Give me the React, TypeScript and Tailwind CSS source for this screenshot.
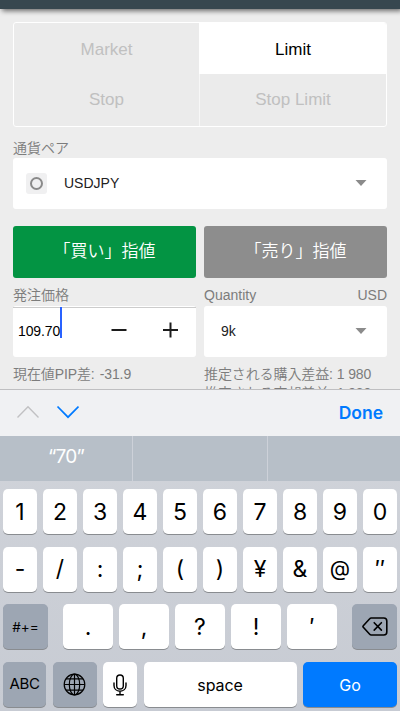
import type { ReactNode } from "react";
import clsx from "clsx";

const NUMBER_ROW = ["1", "2", "3", "4", "5", "6", "7", "8", "9", "0"];
const SYMBOL_ROW = ["-", "/", ":", ";", "(", ")", "¥", "&", "@", "″"];
const PUNCTUATION_ROW = [".", ",", "?", "!", "′"];

const SANS = "font-['Liberation_Sans','Noto_Sans_CJK_JP',sans-serif]";

function Key({
  children,
  className,
  tone = "light",
  label,
}: {
  children: ReactNode;
  className?: string;
  tone?: "light" | "dark" | "blue";
  label?: string;
}) {
  return (
    <button
      type="button"
      aria-label={label}
      className={clsx(
        "flex h-[45px] items-center justify-center rounded-[5px] shadow-[0_1px_0_#898c90]",
        tone === "light" && "bg-white text-black",
        tone === "dark" && "bg-[#9da6b3] text-black",
        tone === "blue" && "bg-[#007aff] text-white",
        className,
      )}
    >
      {children}
    </button>
  );
}

function Caret() {
  return (
    <svg width="12" height="6" viewBox="0 0 12 6" className="mb-0.5 fill-[#8b8b8b]">
      <path d="M0.5 0h11L6 6z" />
    </svg>
  );
}

function GlobeIcon() {
  return (
    <svg width="23" height="23" viewBox="0 0 23 23" fill="none" stroke="#000" strokeWidth="1.2">
      <circle cx="11.5" cy="11.5" r="10.3" />
      <ellipse cx="11.5" cy="11.5" rx="5.2" ry="10.3" />
      <path d="M11.5 1.2v20.6M1.2 11.5h20.6M3.2 5.8h16.6M3.2 17.2h16.6" />
    </svg>
  );
}

function MicIcon() {
  return (
    <svg
      width="14"
      height="22"
      viewBox="0 0 14 22"
      fill="none"
      stroke="#000"
      strokeWidth="1.4"
      strokeLinecap="round"
    >
      <rect x="3.7" y="1" width="6.6" height="14" rx="3.3" />
      <path d="M1 9v2.4c0 3.4 2.5 5.8 6 5.8s6-2.4 6-5.8V9M7 17.2v3.6M3.7 20.8h6.6" />
    </svg>
  );
}

function DeleteIcon() {
  return (
    <svg
      width="26"
      height="19"
      viewBox="0 0 26 19"
      fill="none"
      stroke="#000"
      strokeWidth="1.6"
      strokeLinejoin="round"
      strokeLinecap="round"
    >
      <path d="M9.2 1h12.6a3 3 0 0 1 3 3v11a3 3 0 0 1-3 3H9.2a2 2 0 0 1-1.5-.7L1.3 10.3a1.2 1.2 0 0 1 0-1.6L7.7 1.7A2 2 0 0 1 9.2 1z" />
      <path d="M12.2 5.7l7.2 7.4M19.4 5.7l-7.2 7.4" />
    </svg>
  );
}

function OrderForm() {
  return (
    <main className={`h-[380px] overflow-hidden px-[13px] pt-[13px] font-[350] text-[#7c7c7c] ${SANS}`}>
      <div className="grid h-[105px] grid-cols-2 grid-rows-[51px_52px] overflow-hidden rounded-[3px] border border-white bg-[#ebebeb] text-[17px] text-[#c0c0c0]">
        <button type="button" className="border-r border-white pt-0.5">
          Market
        </button>
        <button type="button" className="bg-white pt-0.5 text-black">
          Limit
        </button>
        <button type="button" className="border-r border-[#f7f7f7]">
          Stop
        </button>
        <button type="button">Stop Limit</button>
      </div>

      <div className="mt-[11px] h-5 text-[14px] leading-5">通貨ペア</div>
      <div className="flex h-[51px] items-center rounded-[3px] bg-white pr-5 pl-[13px]">
        <span className="flex size-[21px] items-center justify-center rounded-[3px] bg-[#f0f0f1]">
          <span className="size-[13px] rounded-full border-2 border-[#8a8a8a]" />
        </span>
        <span className="ml-[17px] flex-1 text-[14px] text-[#212121]">USDJPY</span>
        <Caret />
      </div>

      <div className="mt-[17px] grid grid-cols-2 gap-2 text-[17px] text-white">
        <button type="button" className="h-[52px] rounded-[3px] bg-[#039443]">
          「買い」指値
        </button>
        <button type="button" className="h-[52px] rounded-[3px] bg-[#8d8d8d]">
          「売り」指値
        </button>
      </div>

      <div className="mt-[7px] grid grid-cols-2 gap-2 text-[14px]">
        <div>
          <div className="h-[21px] leading-5">発注価格</div>
          <div className="flex h-[51px] rounded-[3px] border-t border-white bg-white">
            <div className="flex w-full items-center border-t border-[#ccc] pl-[5px] text-black">
              <span className="-mt-0.5 tracking-[-0.1px]">109.70</span>
              <span className="-mt-[20px] h-[31px] w-[2px] shrink-0 self-center bg-[#2962ff]" />
              <svg width="72" height="18" viewBox="0 0 72 18" className="mb-1.5 ml-[47px]" stroke="#1c1c1c" strokeWidth="2">
                <path d="M2.5 9h15M54 9h15M61.5 1.5v15" />
              </svg>
            </div>
          </div>
        </div>
        <div>
          <div className="flex h-[21px] justify-between leading-[21px]">
            <span>Quantity</span>
            <span>USD</span>
          </div>
          <div className="flex h-[51px] items-center rounded-[3px] bg-white pr-5 pl-[17px]">
            <span className="flex-1 text-[#212121]">9k</span>
            <Caret />
          </div>
        </div>
      </div>

      <div className="mt-2 grid grid-cols-2 gap-2 text-[14px] leading-[19px] tracking-[-0.1px] whitespace-nowrap">
        <div>
          現在値PIP差:<span className="ml-[5px]">-31.9</span>
        </div>
        <div>
          <div>推定される購入差益: 1 980</div>
          <div>推定される売却差益: 1 980</div>
        </div>
      </div>
    </main>
  );
}

function Keyboard() {
  return (
    <section className="h-[322px] bg-linear-to-b from-[#d2d5db] to-[#c7cbd3] font-[Inter,sans-serif]">
      <div className="flex h-[47px] items-center border-t border-[#bfbfc1] bg-[#f0f1f3] px-[17px]">
        <svg width="62" height="14" viewBox="0 0 62 14" fill="none" strokeWidth="1.4" className="mb-0.5">
          <path d="M0.5 12.5L11 1.8l10.5 10.7" stroke="#c1c1c3" />
          <path d="M40.5 1.5L51 12.2l10.5-10.7" stroke="#007aff" strokeWidth="1.7" />
        </svg>
        <button
          type="button"
          className="ml-auto text-[17.5px] font-semibold text-[#007aff]"
        >
          Done
        </button>
      </div>

      <div className="flex h-[45px] bg-[#b7bfc8] text-[19px] leading-[41px] text-white">
        <div className="w-[133px] border-r border-[#cdd1d9] text-center tracking-[-0.8px]">“70”</div>
        <div className="w-[135px] border-r border-[#cdd1d9]" />
        <div className="flex-1" />
      </div>

      <div className="flex flex-col gap-[12.7px] px-[3px] pt-2">
        <div className="grid grid-cols-10 gap-[6px] text-[23px] font-[380]">
          {NUMBER_ROW.map((k) => (
            <Key key={k} className="pt-0.5">
              {k}
            </Key>
          ))}
        </div>
        <div className="grid grid-cols-10 gap-[6px] text-[23px] font-[380]">
          {SYMBOL_ROW.map((k) => (
            <Key key={k} className={k === "@" ? "text-[21px]" : undefined}>
              {k}
            </Key>
          ))}
        </div>
        <div className="flex justify-between text-[23px]">
          <Key tone="dark" className="w-[45px] text-[13.5px]">
            #+=
          </Key>
          <div className="flex gap-[6px] font-[380]">
            {PUNCTUATION_ROW.map((k) => (
              <Key key={k} className="w-[50px]">
                {k}
              </Key>
            ))}
          </div>
          <Key tone="dark" className="w-[45px]" label="Delete">
            <DeleteIcon />
          </Key>
        </div>
        <div className="flex gap-[6.5px] text-[16px] tracking-[-0.1px]">
          <Key tone="dark" className="w-[43px] text-[15px] font-[380] tracking-[-0.4px]">
            ABC
          </Key>
          <Key tone="dark" className="w-[44px]" label="Next keyboard">
            <GlobeIcon />
          </Key>
          <Key className="w-[34px]" label="Dictate">
            <MicIcon />
          </Key>
          <Key className="flex-1">space</Key>
          <Key tone="blue" className="w-[94px]">
            Go
          </Key>
        </div>
      </div>
    </section>
  );
}

export default function App() {
  return (
    <div className="h-[711px] w-[400px] overflow-hidden bg-[#ededed]">
      <header className="h-[9px] bg-[#37474f] shadow-[2px_2px_5px_rgba(0,0,0,0.55)]" />
      <OrderForm />
      <Keyboard />
    </div>
  );
}
